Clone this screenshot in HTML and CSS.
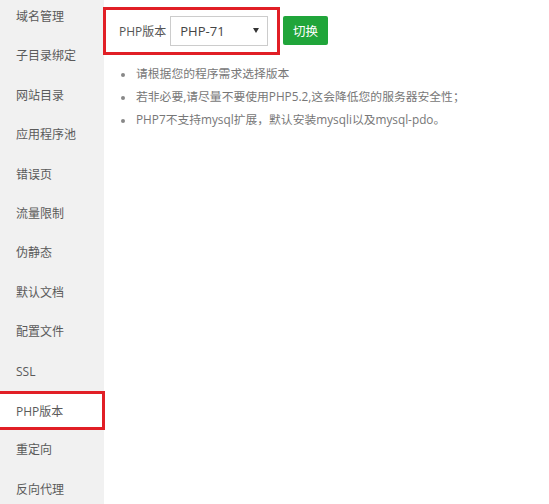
FILE: index.html
```html
<!DOCTYPE html>
<html lang="zh">
<head>
<meta charset="utf-8">
<title>PHP版本</title>
<link rel="stylesheet" href="styles.css">
</head>
<body>
<div class="page">
  <nav class="side">
    <div class="item">域名管理</div>
    <div class="item">子目录绑定</div>
    <div class="item">网站目录</div>
    <div class="item">应用程序池</div>
    <div class="item">错误页</div>
    <div class="item">流量限制</div>
    <div class="item">伪静态</div>
    <div class="item">默认文档</div>
    <div class="item">配置文件</div>
    <div class="item">SSL</div>
    <div class="item active">PHP版本</div>
    <div class="item">重定向</div>
    <div class="item">反向代理</div>
  </nav>
  <main class="content">
    <div class="toolbar">
      <div class="pick">
        <span class="label">PHP版本</span>
        <div class="select"><span>PHP-71</span><span class="arrow"></span></div>
      </div>
      <button class="btn">切换</button>
    </div>
    <ul class="tips">
      <li>请根据您的程序需求选择版本</li>
      <li>若非必要,请尽量不要使用PHP5.2,这会降低您的服务器安全性；</li>
      <li>PHP7不支持mysql扩展，默认安装mysqli以及mysql-pdo。</li>
    </ul>
  </main>
</div>
</body>
</html>
```
FILE: styles.css
```css
* { box-sizing: border-box; }
html, body { margin: 0; padding: 0; background: #fff; }
body {
  font-family: "Open Sans", "Noto Sans CJK SC", sans-serif;
  color: #555;
  width: 549px;
  height: 504px;
  overflow: hidden;
}
.page { display: flex; height: 504px; }
.side {
  width: 104px;
  flex: none;
  background: #f1f1f1;
  display: flex;
  flex-direction: column;
  margin-top: -3px;
}
.item {
  height: 39.4px;
  line-height: 39.4px;
  padding-left: 16px;
  font-size: 12px;
  color: #5a5a5a;
  white-space: nowrap;
}
.item.active {
  background: #fff;
  border: 3px solid #e11f26;
  border-left: none;
  width: 105px;
  line-height: 36px;
  position: relative;
  z-index: 1;
}
.content { flex: 1; padding-top: 7px; }
.toolbar { display: flex; align-items: flex-start; }
.pick {
  width: 177px;
  height: 48px;
  border: 3px solid #e11f26;
  display: flex;
  align-items: center;
  padding-left: 13px;
  margin-left: -1px;
}
.label { font-size: 12px; color: #555; margin-right: 4px; white-space: nowrap; }
.select {
  width: 98px;
  height: 30px;
  border: 1px solid #ccc;
  display: flex;
  align-items: center;
  justify-content: space-between;
  padding: 0 8px 0 9px;
  font-size: 13px;
  color: #444;
  margin-top: -1px;
}
.arrow {
  width: 0;
  height: 0;
  border-left: 3px solid transparent;
  border-right: 3px solid transparent;
  border-top: 5px solid #333;
}
.btn {
  margin-left: 3px;
  margin-top: 9px;
  width: 45px;
  height: 29px;
  background: #20a53a;
  border: none;
  border-radius: 2px;
  color: #fff;
  font-family: "Noto Sans CJK SC", sans-serif;
  font-size: 12.5px;
  padding: 0;
}
.tips {
  margin: 7px 0 0 0;
  padding: 0 0 0 31px;
  list-style: disc;
  color: #777;
  font-size: 11.8px;
}
.tips li { line-height: 23px; padding-left: 1px; }
.tips li::marker { color: #888; font-size: 10px; }
```
